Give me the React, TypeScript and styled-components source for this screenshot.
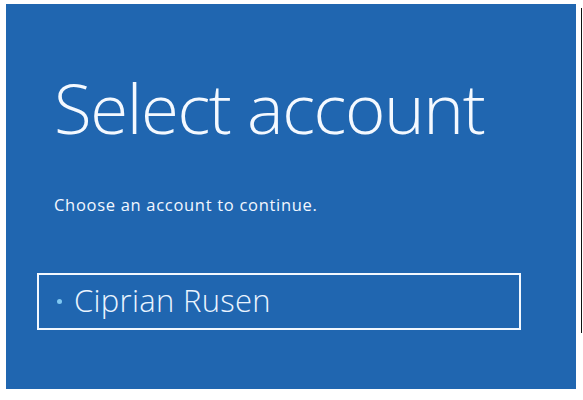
import React from 'react'
import styled, { createGlobalStyle } from 'styled-components'

const GlobalStyle = createGlobalStyle`
  html, body {
    margin: 0;
    padding: 0;
    background: #ffffff;
  }
`

const Page = styled.div`
  display: flex;
  align-items: flex-start;
  gap: 5px;
  width: 583px;
  height: 400px;
  padding: 4px 0 0 6px;
  box-sizing: border-box;
`

const Panel = styled.main`
  display: flex;
  flex-direction: column;
  width: 570px;
  height: 385px;
  padding: 0 0 0 48px;
  box-sizing: border-box;
  background-color: #2066b0;
  color: #ffffff;
  font-family: "Open Sans", "Noto Sans", sans-serif;
`

const EdgeLine = styled.div`
  width: 1px;
  height: 325px;
  margin-top: 4px;
  background-color: #111;
`

const Title = styled.h1`
  margin: 58px 0 0;
  font-size: 69px;
  font-weight: 300;
  line-height: 90px;
  letter-spacing: -1.4px;
  color: #f4f9ff;
`

const Subtitle = styled.p`
  margin: 43px 0 0;
  font-size: 16.5px;
  line-height: 20px;
  letter-spacing: 0.7px;
  color: #f2f7ff;
`

const AccountList = styled.ul`
  list-style: none;
  margin: 58px 0 0 -17px;
  padding: 0;
`

const AccountButton = styled.li<{ selected: boolean }>`
  display: flex;
  align-items: center;
  gap: 12px;
  width: 484px;
  height: 57px;
  padding-left: 18px;
  box-sizing: border-box;
  border: 2.5px solid ${(props) => (props.selected ? '#f2f8ff' : 'transparent')};
  font-size: 31px;
  font-weight: 300;
  letter-spacing: 0.3px;
  cursor: pointer;
`

const Dot = styled.span`
  width: 5px;
  height: 5px;
  border-radius: 50%;
  background-color: #7fc8f2;
`

const AccountName = styled.span`
  margin-top: -3px;
  color: #eaf4ff;
`

const accounts = ['Ciprian Rusen']

export default function App() {
  return (
    <>
      <GlobalStyle />
      <Page>
        <Panel>
          <Title>Select account</Title>
          <Subtitle>Choose an account to continue.</Subtitle>
          <AccountList>
            {accounts.map((name, i) => (
              <AccountButton key={name} selected={i === 0}>
                <Dot />
                <AccountName>{name}</AccountName>
              </AccountButton>
            ))}
          </AccountList>
        </Panel>
        <EdgeLine />
      </Page>
    </>
  )
}
